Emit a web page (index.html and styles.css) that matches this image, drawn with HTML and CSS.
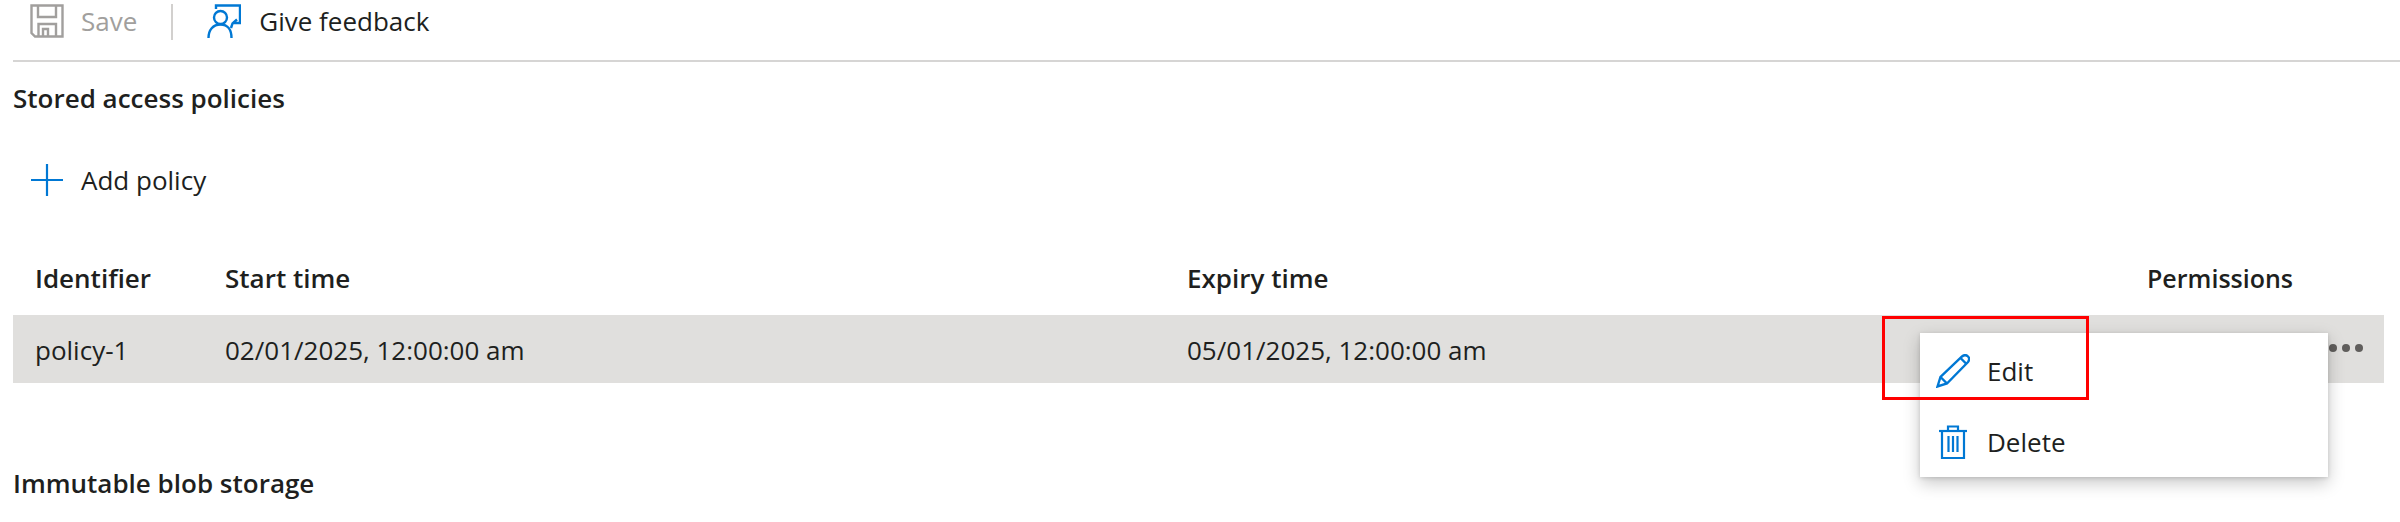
FILE: index.html
```html
<!DOCTYPE html>
<html lang="en">
<head>
<meta charset="utf-8">
<title>Stored access policies</title>
<link rel="stylesheet" href="styles.css">
</head>
<body>
<div class="page">
  <div class="toolbar">
    <button class="cmd cmd-disabled">
      <svg class="icon" viewBox="0 0 34 34" width="34" height="34" fill="none" stroke="#a19f9d" stroke-width="2.4">
        <path d="M1.5 1.5H32.5V32.5H5L1.5 29Z"/>
        <path d="M8 1.5V13H26V1.5"/>
        <path d="M8.5 32.5V20H26V32.5"/>
        <path d="M13 32.5V25H18V32.5"/>
      </svg>
      <span>Save</span>
    </button>
    <span class="sep"></span>
    <button class="cmd">
      <svg class="icon" viewBox="0 0 34 34" width="34" height="34" fill="none" stroke="#0078d4" stroke-width="2.4">
        <path d="M9 5V1.5H33V19H26.5"/>
        <path d="M30 15.5L25.5 19.5L24 24"/>
        <circle cx="13.5" cy="13.5" r="6.5"/>
        <path d="M1.5 34C1.5 26 6 20.5 13.5 20.5S24.5 26 24.5 34"/>
      </svg>
      <span>Give feedback</span>
    </button>
  </div>
  <div class="content">
    <h2 class="title first">Stored access policies</h2>
    <button class="cmd add">
      <svg class="icon" viewBox="0 0 32 32" width="32" height="32" stroke="#0078d4" stroke-width="2.2">
        <path d="M0 16H32M16 0V32"/>
      </svg>
      <span>Add policy</span>
    </button>
    <div class="table">
      <div class="grid head">
        <div>Identifier</div>
        <div>Start time</div>
        <div>Expiry time</div>
        <div class="perm">Permissions</div>
      </div>
      <div class="grid row">
        <div>policy-1</div>
        <div>02/01/2025, 12:00:00 am</div>
        <div>05/01/2025, 12:00:00 am</div>
        <div class="more"><span class="dots"><i></i><i></i><i></i></span></div>
      </div>
      <div class="menu">
        <div class="item">
          <svg class="icon" viewBox="0 0 34 34" width="34" height="34" fill="none" stroke="#0078d4" stroke-width="2.4">
            <path d="M1.5 32.5L4.5 23L26 2.5C28 0.8 30.5 1 32 2.5S33.5 6 32 8L11 29.5Z"/>
            <path d="M4.5 23L11 29.5"/>
            <path d="M24.5 4L30.5 10"/>
          </svg>
          <span>Edit</span>
        </div>
        <div class="item">
          <svg class="icon" viewBox="0 0 34 34" width="34" height="34" fill="none" stroke="#0078d4" stroke-width="2.2">
            <path d="M3 6H31"/>
            <path d="M12 6V1.5H22V6"/>
            <path d="M6 6V33H28V6"/>
            <path d="M12.5 11V27M17 11V27M21.5 11V27"/>
          </svg>
          <span>Delete</span>
        </div>
      </div>
      <div class="callout"></div>
    </div>
    <h2 class="title last">Immutable blob storage</h2>
  </div>
</div>
</body>
</html>
```
FILE: styles.css
```css
html, body {
  margin: 0;
  padding: 0;
  background: #fff;
}

body {
  font-family: "Open Sans", "Noto Sans", "Liberation Sans", sans-serif;
  font-size: 26px;
  color: #201f1e;
  overflow: hidden;
  height: 522px;
}

.page {
  width: 2400px;
}

.toolbar {
  margin-left: 13px;
  padding: 4px 0 0 17px;
  box-sizing: border-box;
  display: flex;
  align-items: flex-start;
  border-bottom: 2px solid #d6d5d4;
  height: 62px;
}

.cmd {
  display: flex;
  align-items: center;
  gap: 18px;
  padding: 0;
  border: 0;
  background: none;
  font: inherit;
  color: inherit;
  height: 34px;
}

.cmd-disabled {
  color: #a19f9d;
  gap: 17px;
}

.sep {
  width: 2px;
  height: 36px;
  background: #d2d0ce;
  margin: 0 34px 0 34px;
}

.icon {
  flex: none;
  display: block;
}

.content {
  margin-left: 13px;
}

.title {
  margin: 0;
  font-size: 26px;
  font-weight: 600;
  line-height: 34px;
}

.title.first {
  padding-top: 19px;
}

.add {
  margin: 49px 0 0 18px;
  height: 32px;
}

.table {
  position: relative;
  margin: 41px 0 0 0;
  width: 2371px;
}

.grid {
  display: grid;
  grid-template-columns: 212px 962px 960px 1fr;
  align-items: center;
  box-sizing: border-box;
}

.grid > div:first-child {
  padding-left: 22px;
}

.head {
  height: 78px;
  padding-top: 4px;
  font-weight: 600;
}

.perm {
  font-size: 25px;
}

.row {
  height: 68px;
  padding-top: 2px;
  background: #e0dfdd;
}

.more {
  display: flex;
  justify-content: flex-end;
}

.dots {
  display: flex;
  gap: 5px;
  margin: -5px 21px 0 0;
}

.dots i {
  display: block;
  width: 8px;
  height: 8px;
  border-radius: 50%;
  background: #605e5c;
}

.menu {
  position: absolute;
  left: 1907px;
  top: 96px;
  width: 408px;
  height: 144px;
  background: #fff;
  box-shadow: 0 6px 16px rgba(0, 0, 0, 0.22), 0 1px 4px rgba(0, 0, 0, 0.14);
  display: flex;
  flex-direction: column;
  padding-top: 2px;
  box-sizing: border-box;
}

.item {
  height: 71px;
  display: flex;
  align-items: center;
  gap: 17px;
  padding-left: 16px;
}

.callout {
  position: absolute;
  left: 1869px;
  top: 79px;
  width: 207px;
  height: 84px;
  box-sizing: border-box;
  border: 3px solid #ff0000;
}

.title.last {
  margin-top: 83px;
}
```
